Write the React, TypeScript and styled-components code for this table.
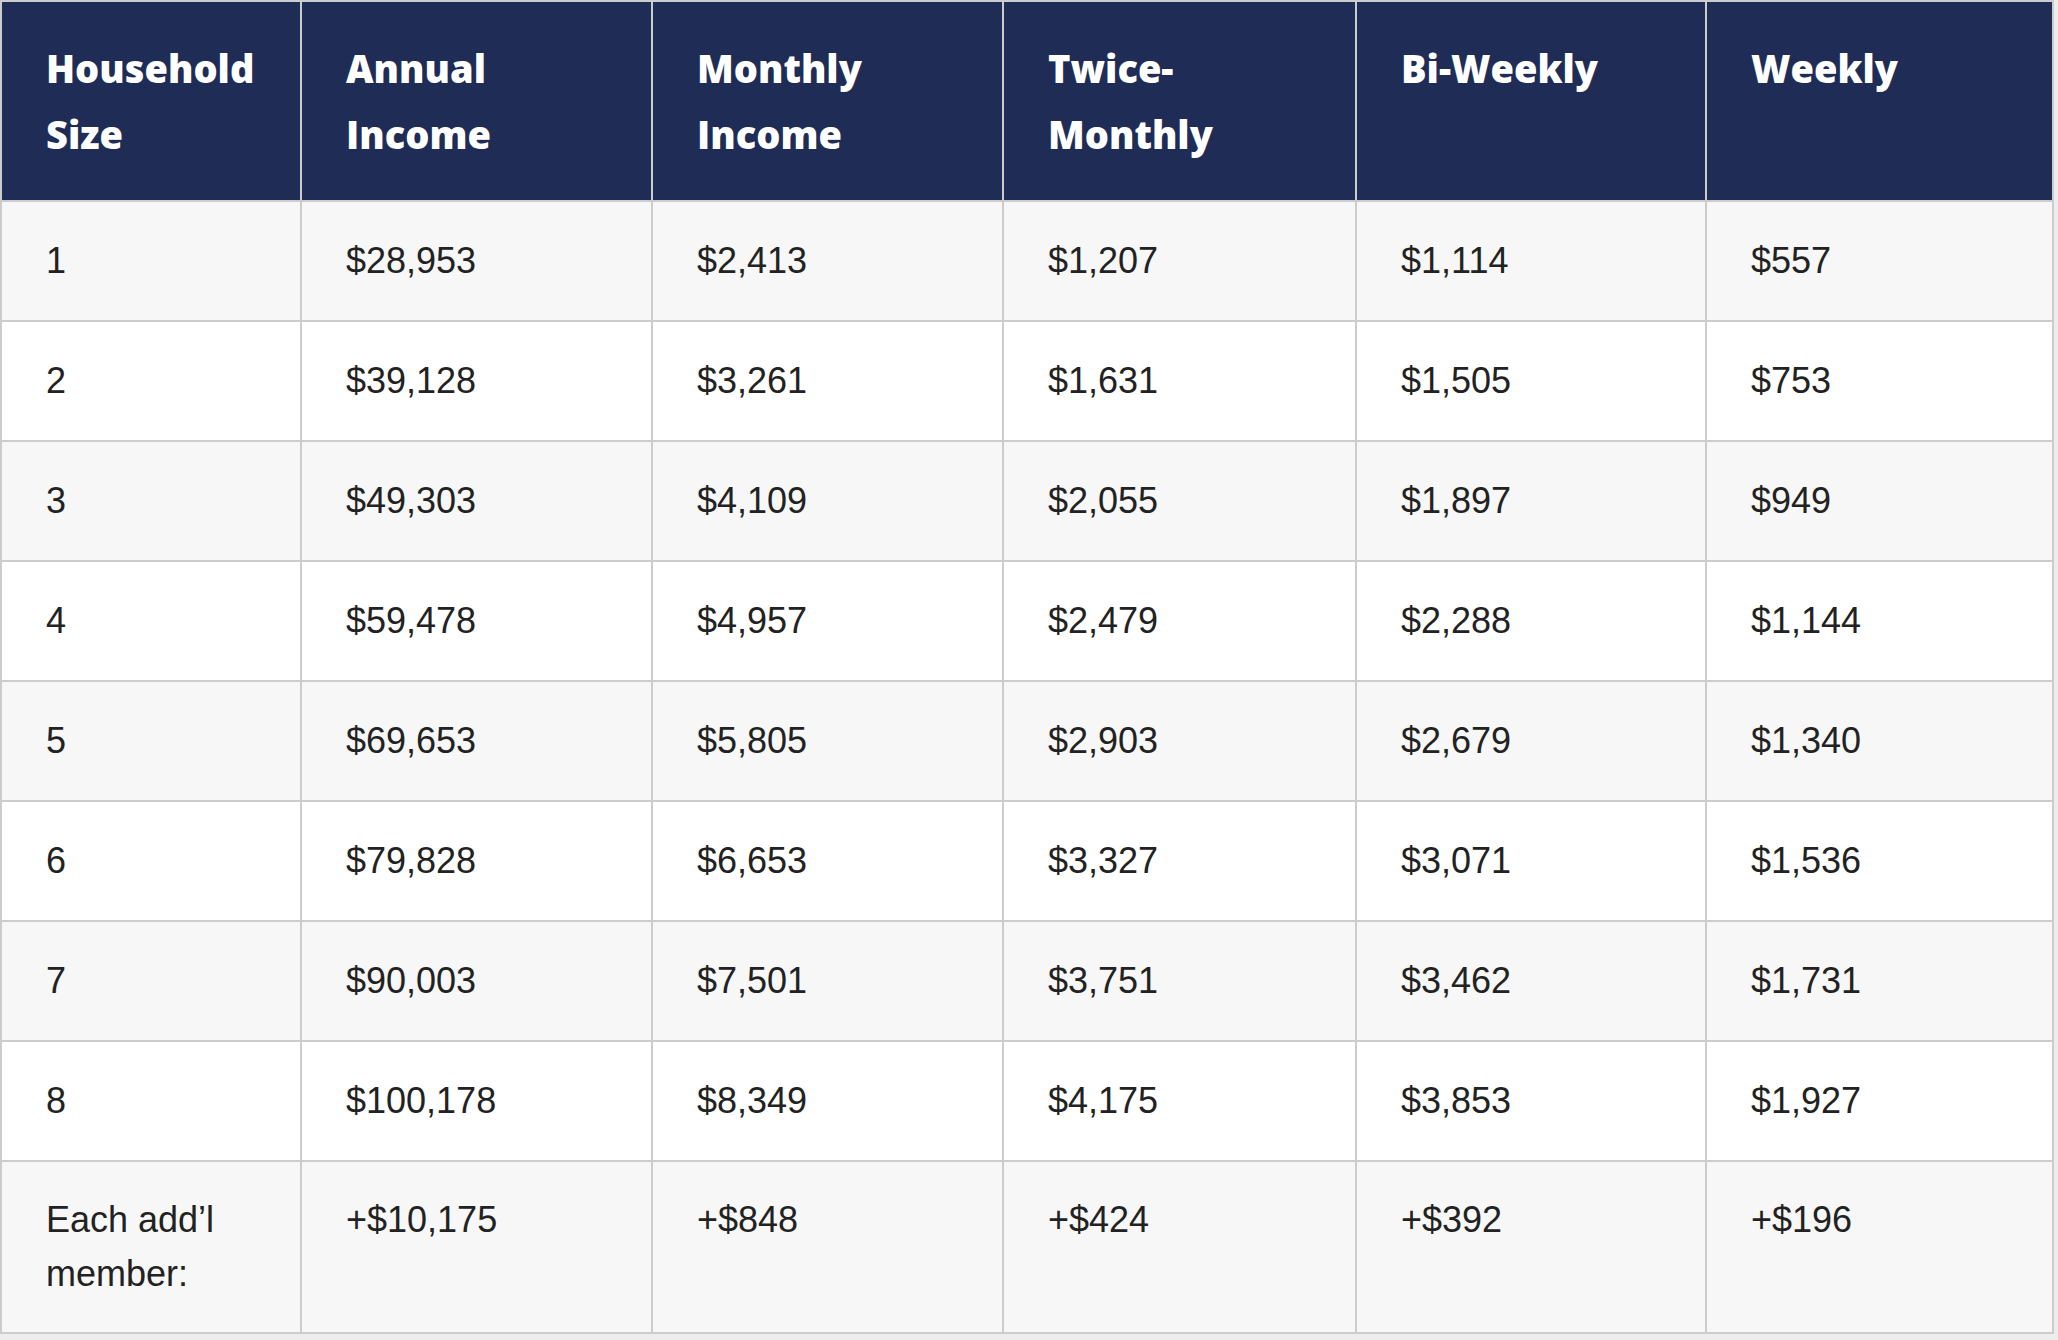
import React from 'react';
import styled, { createGlobalStyle } from 'styled-components';

const GlobalStyle = createGlobalStyle`
  html, body {
    margin: 0;
    padding: 0;
    background: #ededed;
  }
`;

const Table = styled.table`
  width: 2052px;
  table-layout: fixed;
  border-collapse: collapse;
  border: 2px solid #cccccc;
  font-family: 'Liberation Sans', Arial, sans-serif;
`;

const HeadCell = styled.th`
  background: #1f2d56;
  color: #ffffff;
  font-family: 'Open Sans', 'Lato', sans-serif;
  font-weight: 800;
  font-size: 38px;
  line-height: 66px;
  text-align: left;
  vertical-align: top;
  padding: 33px 44px;
  border: 2px solid #cccccc;
`;

const Row = styled.tr<{ $striped: boolean }>`
  background: ${(props) => (props.$striped ? '#f7f7f7' : '#ffffff')};
`;

const Cell = styled.td<{ $tall?: boolean }>`
  color: #222222;
  font-size: 36px;
  line-height: 54px;
  vertical-align: top;
  padding: ${(props) => (props.$tall ? '31px 44px' : '32px 44px')};
  border: 2px solid #cccccc;
`;

const columnWidths = [300, 351, 351, 353, 350, 347];

const headers = [
  ['Household', 'Size'],
  ['Annual', 'Income'],
  ['Monthly', 'Income'],
  ['Twice-', 'Monthly'],
  ['Bi-Weekly'],
  ['Weekly'],
];

const rows = [
  ['1', '$28,953', '$2,413', '$1,207', '$1,114', '$557'],
  ['2', '$39,128', '$3,261', '$1,631', '$1,505', '$753'],
  ['3', '$49,303', '$4,109', '$2,055', '$1,897', '$949'],
  ['4', '$59,478', '$4,957', '$2,479', '$2,288', '$1,144'],
  ['5', '$69,653', '$5,805', '$2,903', '$2,679', '$1,340'],
  ['6', '$79,828', '$6,653', '$3,327', '$3,071', '$1,536'],
  ['7', '$90,003', '$7,501', '$3,751', '$3,462', '$1,731'],
  ['8', '$100,178', '$8,349', '$4,175', '$3,853', '$1,927'],
];

const extraRow = ['+$10,175', '+$848', '+$424', '+$392', '+$196'];

const App: React.FC = () => {
  return (
    <>
      <GlobalStyle />
      <Table>
        <colgroup>
          {columnWidths.map((w, i) => (
            <col key={i} style={{ width: w }} />
          ))}
        </colgroup>
        <thead>
          <tr>
            {headers.map((lines, i) => (
              <HeadCell key={i}>
                {lines.map((line, j) => (
                  <React.Fragment key={j}>
                    {j > 0 && <br />}
                    {line}
                  </React.Fragment>
                ))}
              </HeadCell>
            ))}
          </tr>
        </thead>
        <tbody>
          {rows.map((row, i) => (
            <Row key={i} $striped={i % 2 === 0}>
              {row.map((value, j) => (
                <Cell key={j}>{value}</Cell>
              ))}
            </Row>
          ))}
          <Row $striped>
            <Cell $tall>
              Each add’l
              <br />
              member:
            </Cell>
            {extraRow.map((value, j) => (
              <Cell key={j} $tall>
                {value}
              </Cell>
            ))}
          </Row>
        </tbody>
      </Table>
    </>
  );
};

export default App;
